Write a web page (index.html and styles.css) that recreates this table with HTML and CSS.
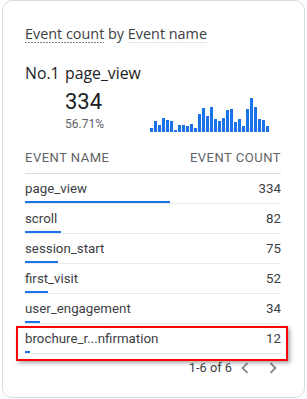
FILE: index.html
```html
<!DOCTYPE html>
<html>
<head>
<meta charset="utf-8">
<link rel="stylesheet" href="styles.css">
</head>
<body>
<div class="card">
  <div class="title"><span class="u u-dark">Event count</span> by <span class="u u-light">Event name</span></div>
  <div class="top">
    <div class="rank">No.1</div>
    <div class="topinfo">
      <div class="topname">page_view</div>
      <div class="valrow">
        <div class="valcol">
          <div class="val">334</div>
          <div class="pct">56.71%</div>
        </div>
        <div class="spark">
          <i style="height:4px"></i><i style="height:11px"></i><i style="height:7px"></i><i style="height:14px"></i><i style="height:12px"></i><i style="height:11px"></i><i style="height:2px"></i><i style="height:7px"></i><i style="height:7px"></i><i style="height:6px"></i><i style="height:8px"></i><i style="height:4px"></i><i style="height:18px"></i><i style="height:24px"></i><i style="height:16px"></i><i style="height:25px"></i><i style="height:13px"></i><i style="height:11px"></i><i style="height:14px"></i><i style="height:22px"></i><i style="height:23px"></i><i style="height:10px"></i><i style="height:13px"></i><i style="height:6px"></i><i style="height:23px"></i><i style="height:34px"></i><i style="height:25px"></i><i style="height:13px"></i><i style="height:12px"></i><i style="height:6px"></i>
        </div>
      </div>
    </div>
  </div>
  <div class="thead"><span>EVENT NAME</span><span>EVENT COUNT</span></div>
  <div class="row"><div class="rowtext"><span>page_view</span><span>334</span></div><div class="bar" style="width:56.71%"></div></div>
  <div class="row"><div class="rowtext"><span>scroll</span><span>82</span></div><div class="bar" style="width:13.92%"></div></div>
  <div class="row"><div class="rowtext"><span>session_start</span><span>75</span></div><div class="bar" style="width:12.73%"></div></div>
  <div class="row"><div class="rowtext"><span>first_visit</span><span>52</span></div><div class="bar" style="width:8.83%"></div></div>
  <div class="row"><div class="rowtext"><span>user_engagement</span><span>34</span></div><div class="bar" style="width:5.77%"></div></div>
  <div class="row row-hl"><div class="rowtext"><span>brochure_r...nfirmation</span><span>12</span></div><div class="bar" style="width:2.04%"></div><div class="hl"></div></div>
  <div class="pager">
    <span class="pager-text">1-6 of 6</span>
    <svg class="chev" width="22" height="22" viewBox="0 0 24 24"><path d="M15.41 7.41L14 6l-6 6 6 6 1.41-1.41L10.83 12z"/></svg>
    <svg class="chev" width="22" height="22" viewBox="0 0 24 24"><path d="M10 6L8.59 7.41 13.17 12l-4.58 4.59L10 18l6-6z"/></svg>
  </div>
</div>
</body>
</html>
```
FILE: styles.css
```css
body {
  margin: 0;
  background: #fff;
  font-family: Roboto, "Noto Sans", sans-serif;
}
.card {
  box-sizing: border-box;
  width: 303px;
  height: 398px;
  margin-left: 2px;
  border: 1px solid #dadce0;
  border-radius: 10px;
  padding: 23px 23px 0 22px;
}
.title {
  font-family: "Open Sans", Roboto, sans-serif;
  font-size: 14.4px;
  line-height: 20px;
  color: #3c4043;
}
.u {
  background-size: 100% 1px;
  background-position: 0 100%;
  background-repeat: no-repeat;
}
.u-dark {
  background-image: repeating-linear-gradient(to right, #80868b 0 2px, transparent 2px 3px);
}
.u-light {
  background-image: repeating-linear-gradient(to right, #dadce0 0 2px, transparent 2px 3px);
}
.top {
  display: flex;
  margin-top: 18px;
  color: #202124;
}
.rank {
  width: 40px;
  font-family: "Open Sans", Roboto, sans-serif;
  font-size: 15.8px;
  line-height: 22px;
}
.topname {
  font-family: "Open Sans", Roboto, sans-serif;
  font-size: 15.8px;
  line-height: 22px;
}
.valrow {
  display: flex;
  align-items: flex-end;
  margin-top: 4px;
}
.valcol {
  width: 85px;
}
.val {
  font-size: 22px;
  line-height: 28px;
}
.pct {
  font-size: 12px;
  line-height: 16px;
  color: #5f6368;
}
.spark {
  display: flex;
  align-items: flex-end;
  gap: 1px;
  height: 34px;
}
.spark i {
  display: block;
  width: 3px;
  background: #1a73e8;
}
.thead {
  display: flex;
  justify-content: space-between;
  margin-top: 18px;
  padding-bottom: 7px;
  border-bottom: 1px solid #dadce0;
  font-size: 13px;
  line-height: 16px;
  letter-spacing: 0.5px;
  color: #5f6368;
}
.row {
  padding-top: 5px;
  border-bottom: 1px solid #e8eaed;
}
.rowtext {
  display: flex;
  justify-content: space-between;
  font-size: 13.3px;
  line-height: 20px;
  color: #3c4043;
}
.bar {
  height: 2px;
  margin-top: 2px;
  background: #1a73e8;
}
.row-hl {
  position: relative;
}
.hl {
  position: absolute;
  left: -9px;
  right: -7px;
  top: 2px;
  bottom: -8px;
  border: 2px solid #f00;
  box-shadow: 2px 2px 4px rgba(0, 0, 0, 0.35);
}
.pager {
  display: flex;
  justify-content: flex-end;
  align-items: center;
  margin-top: 3px;
  margin-right: -3px;
  font-size: 12.8px;
  line-height: 16px;
  color: #3c4043;
}
.pager-text {
  margin-right: 2px;
}
.chev {
  fill: #80868b;
}
.chev + .chev {
  margin-left: 6px;
}
```
